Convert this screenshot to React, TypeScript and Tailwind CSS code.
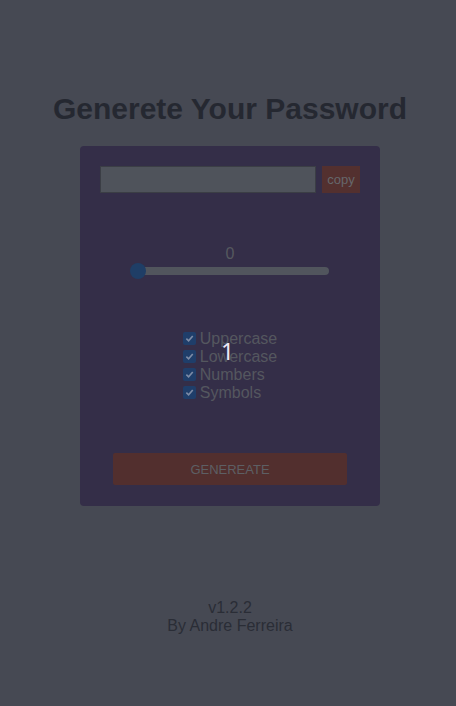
import React from "react";

export default function App() {
  const opts = ["Uppercase", "Lowercase", "Numbers", "Symbols"];
  return (
    <div className="relative min-h-[706px] w-full bg-[#464953] pl-[4px] flex flex-col items-center font-['Liberation_Sans',Arial,sans-serif]">
      <h1 className="mt-[91px] text-[30px] leading-[35px] font-bold text-[#252831]">Generete Your Password</h1>
      <div className="mt-[20px] w-[300px] h-[360px] rounded-[4px] bg-[#342e48] px-5 pt-5 flex flex-col items-center">
        <div className="flex w-full">
          <div className="w-[216px] h-[27px] bg-[#4f535b] border border-[#3b3e45]" />
          <div className="ml-[6px] w-[38px] h-[27px] bg-[#53302f] flex items-center justify-center text-[13px] text-[#66676b]">copy</div>
        </div>
        <div className="mt-[52px] text-[16px] leading-[18px] text-[#56595f]">0</div>
        <div className="relative w-[200px] h-[16px] flex items-center">
          <div className="w-full h-[8px] mx-[1px] rounded-full bg-[#51555d]" />
          <div className="absolute left-0 top-0 w-[16px] h-[16px] rounded-full bg-[#1f3e66]" />
        </div>
        <div className="mt-[50px] flex flex-col">
          {opts.map((o) => (
            <div key={o} className="h-[18px] flex items-center">
              <div className="w-[13px] h-[13px] rounded-[2px] bg-[#1f3e6a] flex items-center justify-center">
                <svg width="9" height="9" viewBox="0 0 10 10">
                  <path d="M1.5 5.2 L4 7.6 L8.6 2.2" stroke="#7d8ba6" strokeWidth="1.8" fill="none" />
                </svg>
              </div>
              <span className="ml-[4px] text-[16px] leading-[18px] text-[#54575f] translate-y-[1px]">{o}</span>
            </div>
          ))}
        </div>
        <div className="mt-[52px] w-[234px] h-[32px] rounded-[2px] bg-[#522f2e] flex items-center justify-center pt-[1px] text-[13px] text-[#5d5f64]">GENEREATE</div>
      </div>
      <div className="mt-[93px] text-[16px] leading-[18px] text-[#2a2d36] text-center">
        <div>v1.2.2</div>
        <div>By Andre Ferreira</div>
      </div>
      <div className="absolute left-[221px] top-[336px] text-[23px] leading-[30px] text-[#ece8f4] font-['Noto_Sans',sans-serif]">1</div>
    </div>
  );
}
